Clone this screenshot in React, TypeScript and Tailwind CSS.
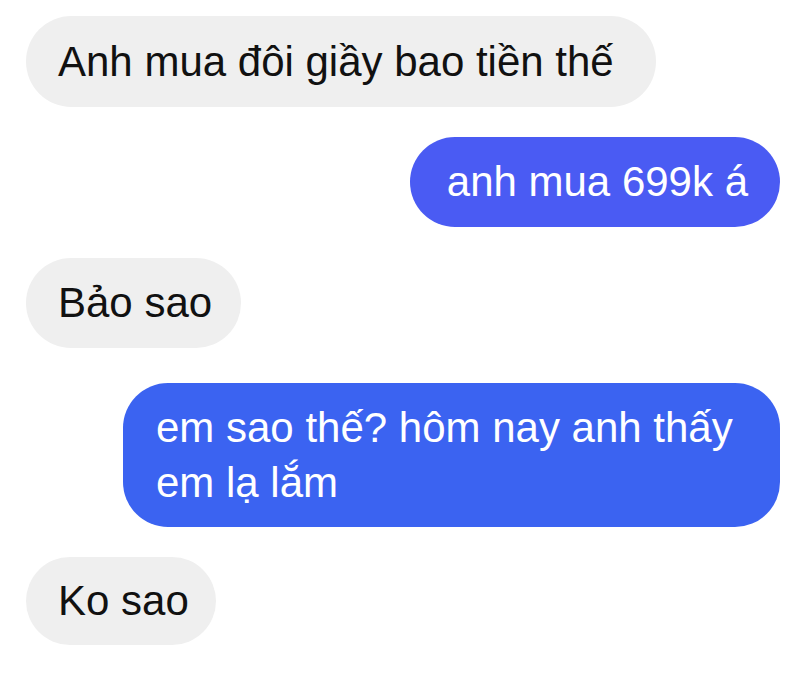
import React from "react";

const font = { fontFamily: '"Liberation Sans", Arial, sans-serif' };

export default function App() {
  return (
    <div
      className="w-[785px] h-[693px] bg-white flex flex-col pt-4 pl-[26px] pr-[5px] overflow-hidden"
      style={font}
    >
      <div className="self-start rounded-full bg-[#efefef] text-[#111] text-[42px] leading-[55px] py-[18px] pl-8 pr-[42px]">
        Anh mua đôi giầy bao tiền thế
      </div>
      <div className="self-end mt-[30px] rounded-full bg-[#4a5bf3] text-white text-[42px] leading-[54px] py-[18px] pl-[37px] pr-8">
        anh mua 699k á
      </div>
      <div className="self-start mt-[31px] rounded-full bg-[#efefef] text-[#111] text-[42px] leading-[54px] py-[18px] pl-8 pr-[29px]">
        Bảo sao
      </div>
      <div className="self-end mt-[35px] w-[657px] rounded-[45px] bg-[#3b63f1] text-white text-[42px] leading-[55px] py-[17px] pl-[33px] pr-6">
        em sao thế? hôm nay anh thấy em lạ lắm
      </div>
      <div className="self-start mt-[30px] rounded-full bg-[#efefef] text-[#111] text-[42px] leading-[54px] py-[17px] pl-8 pr-[27px]">
        Ko sao
      </div>
    </div>
  );
}
